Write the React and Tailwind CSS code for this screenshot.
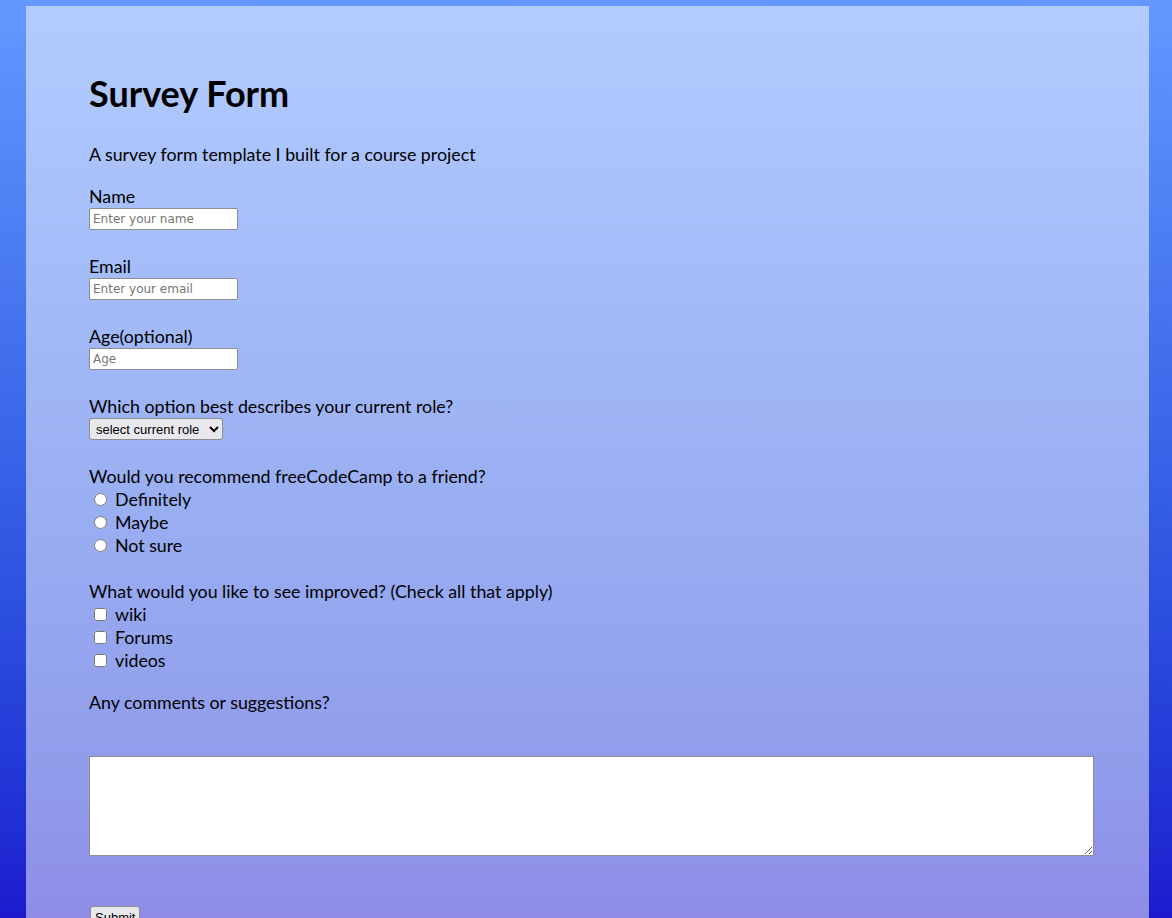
import { useState } from "react";

const field =
	"block w-[149px] h-[22px] px-[3px] bg-white border border-[#8d8d8d] rounded-[2px] text-[12px] text-black placeholder:text-[#757575] font-['DejaVu_Sans',sans-serif]";

const Radio = ({ name, label }) => (
	<label className="flex items-center h-[23px]">
		<input type="radio" name={name} className="ml-[5px] mr-[8px] w-[13px] h-[13px]" />
		{label}
	</label>
);

const Check = ({ label }) => (
	<label className="flex items-center h-[23px]">
		<input type="checkbox" className="ml-[5px] mr-[8px] w-[13px] h-[13px]" />
		{label}
	</label>
);

export default function App() {
	const [role, setRole] = useState("");

	return (
		<div className="min-h-screen bg-gradient-to-b from-[#6598ff] to-[#1d03cb] pt-[6px] font-['Lato',sans-serif] text-[17.8px] text-black">
			<div className="ml-[26px] mr-[23px] bg-white/50 px-[63px] pt-[65px] pb-[40px]">
				<h1 className="text-[36px] font-bold leading-[44px] mb-[27px]">Survey Form</h1>
				<p className="leading-[24px] mb-[18px]">A survey form template I built for a course project</p>

				<form onSubmit={(e) => e.preventDefault()}>
					{/* NAME */}
					<div className="mb-[24px]">
						<label className="block leading-[24px]">Name</label>
						<input type="text" placeholder="Enter your name" className={field} />
					</div>

					{/* EMAIL */}
					<div className="mb-[24px]">
						<label className="block leading-[24px]">Email</label>
						<input type="email" placeholder="Enter your email" className={field} />
					</div>

					{/* AGE */}
					<div className="mb-[24px]">
						<label className="block leading-[24px]">Age(optional)</label>
						<input type="number" placeholder="Age" className={field} />
					</div>

					{/* ROLE */}
					<div className="mb-[24px]">
						<label className="block leading-[24px]">Which option best describes your current role?</label>
						<select
							value={role}
							onChange={(e) => setRole(e.target.value)}
							className="block w-[134px] h-[22px] pl-[2px] bg-[#e9e9ed] border border-[#8d8d8d] rounded-[3px] text-[13px] font-['Liberation_Sans',sans-serif]"
						>
							<option value="">select current role</option>
							<option value="student">Student</option>
							<option value="full-time">Full Time Job</option>
							<option value="learner">Full Time Learner</option>
							<option value="other">Other</option>
						</select>
					</div>

					{/* RECOMMEND */}
					<div className="mb-[22px]">
						<p className="leading-[24px]">Would you recommend freeCodeCamp to a friend?</p>
						<Radio name="rec" label="Definitely" />
						<Radio name="rec" label="Maybe" />
						<Radio name="rec" label="Not sure" />
					</div>

					{/* IMPROVED */}
					<div className="mb-[18px]">
						<p className="leading-[24px]">What would you like to see improved? (Check all that apply)</p>
						<Check label="wiki" />
						<Check label="Forums" />
						<Check label="videos" />
					</div>

					{/* COMMENTS */}
					<div>
						<p className="leading-[24px] mb-[42px]">Any comments or suggestions?</p>
						<textarea className="block w-[1005px] h-[100px] bg-white border border-[#8d8d8d] text-[13px]" />
					</div>

					<button
						type="submit"
						className="mt-[50px] ml-[1px] px-[4px] h-[24px] bg-[#e9e9ed] border border-[#8d8d8d] rounded-[3px] text-[13px] font-['Liberation_Sans',sans-serif]"
					>
						Submit
					</button>
				</form>
			</div>
		</div>
	);
}
